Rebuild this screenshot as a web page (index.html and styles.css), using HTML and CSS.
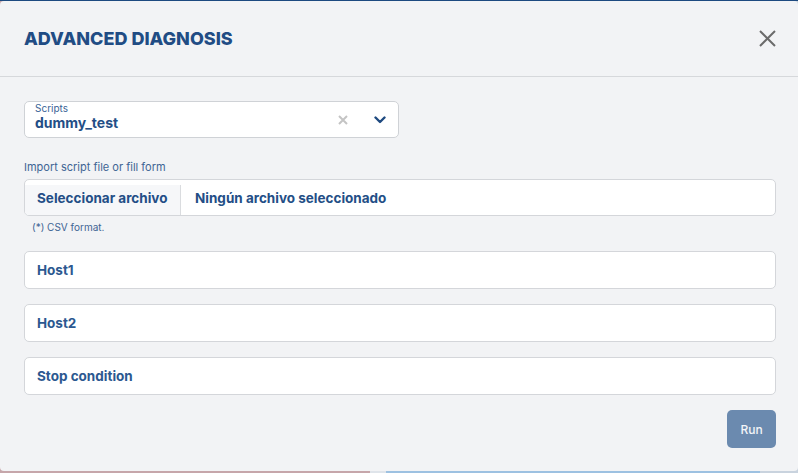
FILE: index.html
```html
<!DOCTYPE html>
<html lang="es">
<head>
<meta charset="utf-8">
<title>Advanced Diagnosis</title>
<link rel="stylesheet" href="styles.css">
</head>
<body>
<div class="modal">
  <header class="modal-header">
    <h1 class="modal-title">ADVANCED DIAGNOSIS</h1>
    <button class="close-btn" aria-label="Close">
      <svg width="17" height="17" viewBox="0 0 17 17"><path d="M1 1L16 16M16 1L1 16" stroke="#6b6b6b" stroke-width="2" fill="none"/></svg>
    </button>
  </header>
  <div class="modal-body">
    <div class="select">
      <div class="select-value">
        <span class="select-label">Scripts</span>
        <span class="select-text">dummy_test</span>
      </div>
      <span class="select-clear">
        <svg width="10" height="10" viewBox="0 0 10 10"><path d="M1 1L9 9M9 1L1 9" stroke="#c4c4c4" stroke-width="2" fill="none"/></svg>
      </span>
      <span class="select-arrow">
        <svg width="12" height="8" viewBox="0 0 12 8"><path d="M1.5 1.5L6 6L10.5 1.5" stroke="#1f4a80" stroke-width="2.4" fill="none" stroke-linecap="round" stroke-linejoin="round"/></svg>
      </span>
    </div>

    <div class="import-block">
      <div class="small-label">Import script file or fill form</div>
      <div class="file-input">
        <span class="file-btn">Seleccionar archivo</span>
        <span class="file-name">Ningún archivo seleccionado</span>
      </div>
      <div class="hint">(*) CSV format.</div>
    </div>

    <div class="field">Host1</div>
    <div class="field">Host2</div>
    <div class="field">Stop condition</div>

    <div class="actions">
      <button class="run-btn">Run</button>
    </div>
  </div>
</div>
</body>
</html>
```

FILE: styles.css
```css
html, body {
  margin: 0;
  padding: 0;
  height: 100%;
}
body {
  font-family: Inter, "Noto Sans", sans-serif;
  background:
    linear-gradient(#1d4a80 0 1px, transparent 1px),
    linear-gradient(to right, #c6a6aa 0 370px, #dfe4ea 370px 386px, #9dc1e1 386px 760px, #c9d3de 760px);
  overflow: hidden;
}
.modal {
  margin-top: 1px;
  height: 470px;
  background: #f2f3f5;
  border-radius: 4px;
  box-sizing: border-box;
}
.modal-header {
  height: 75px;
  border-bottom: 1px solid #d6d8db;
  display: flex;
  align-items: center;
  justify-content: space-between;
  padding: 0 22px 0 24px;
}
.modal-title {
  margin: 0;
  font-size: 18px;
  font-weight: 800;
  color: #214c84;
  line-height: 22px;
}
.close-btn {
  background: none;
  border: 0;
  padding: 0;
  width: 17px;
  height: 17px;
  display: flex;
  cursor: pointer;
}
.modal-body {
  padding: 24px 22px 0 24px;
  display: flex;
  flex-direction: column;
}
.select {
  width: 375px;
  height: 37px;
  box-sizing: border-box;
  background: #fff;
  border: 1px solid #cfd2d6;
  border-radius: 5px;
  display: flex;
  align-items: center;
  padding: 0 12px 0 10px;
}
.select-value {
  flex: 1;
  align-self: flex-start;
  display: flex;
  flex-direction: column;
}
.select-label {
  font-size: 10px;
  line-height: 12px;
  color: #3a6396;
}
.select-text {
  font-size: 14px;
  line-height: 17px;
  font-weight: 700;
  color: #234e86;
}
.select-clear {
  display: flex;
  margin-right: 26px;
}
.select-arrow {
  display: flex;
}
.import-block {
  margin-top: 23px;
  display: flex;
  flex-direction: column;
}
.small-label {
  font-size: 11px;
  color: #3f6594;
  line-height: 13px;
  margin-bottom: 5px;
}
.file-input {
  height: 37px;
  box-sizing: border-box;
  background: #fff;
  border: 1px solid #d4d6da;
  border-radius: 5px;
  display: flex;
  align-items: stretch;
  overflow: hidden;
  font-size: 13.5px;
  font-weight: 700;
  color: #234e86;
}
.file-btn {
  width: 156px;
  box-sizing: border-box;
  background: #f6f7f9;
  display: flex;
  align-items: center;
  padding: 0 0 5px 12px;
  border-right: 1px solid #dadcdf;
  margin-top: 5px;
}
.file-name {
  display: flex;
  align-items: center;
  padding-left: 14px;
}
.hint {
  font-size: 10px;
  color: #3f6594;
  margin: 5px 0 0 8px;
  line-height: 12px;
}
.field {
  height: 38px;
  box-sizing: border-box;
  background: #fff;
  border: 1px solid #d4d6da;
  border-radius: 5px;
  display: flex;
  align-items: center;
  padding-left: 12px;
  font-size: 13.5px;
  font-weight: 700;
  color: #2b5890;
  margin-top: 15px;
}
.import-block + .field {
  margin-top: 18px;
}
.actions {
  display: flex;
  justify-content: flex-end;
  margin-top: 15px;
}
.run-btn {
  width: 49px;
  height: 38px;
  border: 0;
  border-radius: 5px;
  background: #6b8aaf;
  color: #f3f5f8;
  font-family: Inter, "Noto Sans", sans-serif;
  font-size: 12px;
  font-weight: 500;
  cursor: pointer;
}
```
